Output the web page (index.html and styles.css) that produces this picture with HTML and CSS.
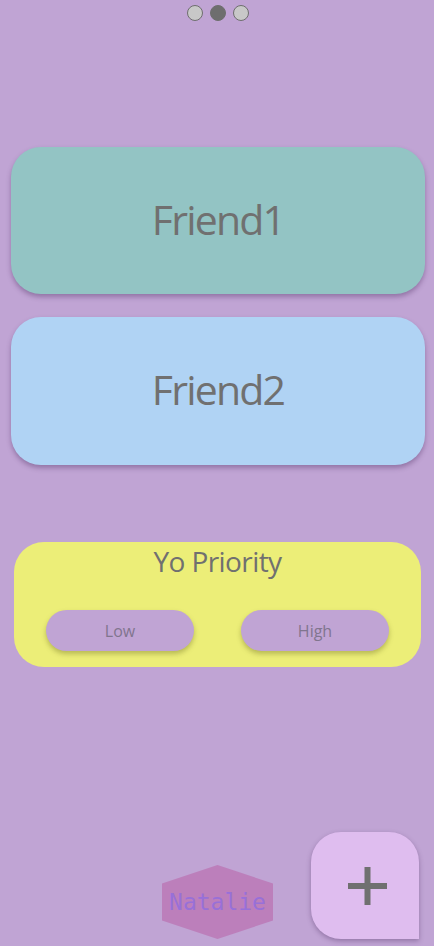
FILE: index.html
```html
<!DOCTYPE html>
<html lang="en">
<head>
<meta charset="utf-8">
<title>Yo</title>
<link rel="stylesheet" href="styles.css">
</head>
<body>
<div class="page">
  <div class="dots">
    <span class="dot"></span>
    <span class="dot dot-active"></span>
    <span class="dot"></span>
  </div>

  <div class="cards">
    <div class="card card-teal">Friend1</div>
    <div class="card card-blue">Friend2</div>
  </div>

  <div class="priority">
    <div class="priority-title">Yo Priority</div>
    <div class="priority-buttons">
      <button class="pill">Low</button>
      <button class="pill">High</button>
    </div>
  </div>

  <div class="bottom">
    <div class="hex">Natalie</div>
    <button class="fab" aria-label="Add">
      <svg width="39" height="38" viewBox="0 0 39 38">
        <rect x="16.5" y="0" width="6" height="38" fill="#707070"/>
        <rect x="0" y="16" width="39" height="6" fill="#707070"/>
      </svg>
    </button>
  </div>
</div>
</body>
</html>
```

FILE: styles.css
```css
html, body {
  margin: 0;
  padding: 0;
}

body {
  background: #c0a4d4;
  font-family: "Open Sans", "Noto Sans", sans-serif;
  color: #707070;
}

.page {
  height: 946px;
  display: flex;
  flex-direction: column;
  box-sizing: border-box;
}

.dots {
  display: flex;
  justify-content: center;
  gap: 7px;
  padding-top: 5px;
  padding-left: 1px;
}

.dot {
  width: 16px;
  height: 16px;
  box-sizing: border-box;
  border-radius: 50%;
  background: #c8c8c8;
  border: 1.5px solid #6e6e6e;
}

.dot-active {
  background: #6e6e6e;
}

.cards {
  margin-top: 126px;
  padding-left: 11px;
  padding-right: 9px;
  display: flex;
  flex-direction: column;
  gap: 23px;
}

.card {
  height: 147px;
  border-radius: 30px;
  display: flex;
  align-items: center;
  justify-content: center;
  font-size: 41px;
  letter-spacing: -1.8px;
  padding-bottom: 4px;
  box-sizing: border-box;
  box-shadow: 0 3px 5px rgba(60, 30, 80, 0.35);
}

.card-teal {
  background: #93c4c4;
}

.card-blue {
  background: #b0d3f4;
  height: 148px;
}

.priority {
  margin: 77px 13px 0 14px;
  height: 125px;
  box-sizing: border-box;
  background: #ecee78;
  border-radius: 30px;
  padding: 2px 32px 0;
}

.priority-title {
  text-align: center;
  font-size: 28px;
  line-height: 34px;
  letter-spacing: -0.6px;
}

.priority-buttons {
  margin-top: 32px;
  display: flex;
  justify-content: space-between;
}

.pill {
  width: 148px;
  height: 41px;
  border: none;
  border-radius: 21px;
  background: #c0a4d4;
  color: #80758e;
  font-family: "Open Sans", "Noto Sans", sans-serif;
  font-size: 16px;
  padding: 0;
  box-shadow: 0 3px 5px rgba(90, 90, 20, 0.35);
}

.bottom {
  margin-top: auto;
  display: flex;
  justify-content: flex-end;
  align-items: flex-end;
  gap: 38px;
  padding-right: 15px;
  padding-bottom: 7px;
}

.hex {
  width: 111px;
  height: 74px;
  background: #bc7fbb;
  clip-path: polygon(50% 0, 100% 25%, 100% 75%, 50% 100%, 0 75%, 0 25%);
  display: flex;
  align-items: center;
  justify-content: center;
  font-family: "DejaVu Sans Mono", "Liberation Mono", monospace;
  font-size: 23px;
  color: #9870d8;
}

.fab {
  width: 108px;
  height: 107px;
  border: none;
  padding: 0 0 0 4px;
  background: #dfbdef;
  border-radius: 30px 30px 0 30px;
  display: flex;
  align-items: center;
  justify-content: center;
  box-shadow: 0 2px 5px rgba(60, 30, 80, 0.35);
}
```
